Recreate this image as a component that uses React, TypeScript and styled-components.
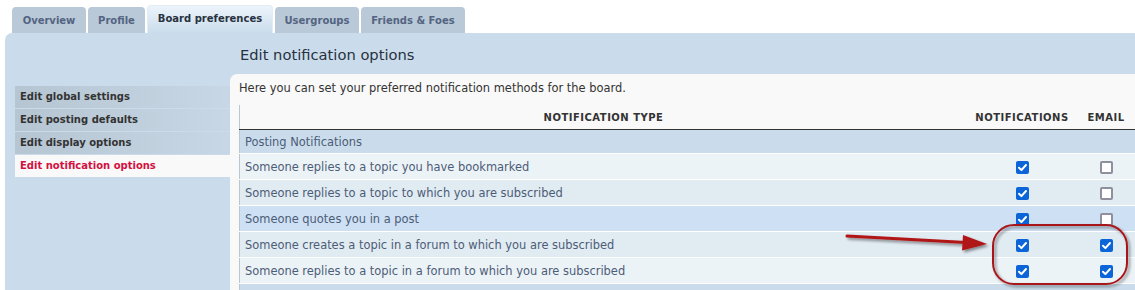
import React from "react";
import styled, { createGlobalStyle } from "styled-components";

const GlobalStyle = createGlobalStyle`
  body {
    margin: 0;
    background: #ffffff;
    font-family: "DejaVu Sans", Verdana, sans-serif;
  }
`;

const Page = styled.div`
  position: relative;
  width: 1135px;
  height: 290px;
  overflow: hidden;
`;

const TabBar = styled.div`
  display: flex;
  align-items: flex-end;
  gap: 2px;
  height: 33px;
  padding-left: 12px;
  box-sizing: border-box;
`;

const Tab = styled.div<{ $active?: boolean; $w: number }>`
  width: ${(p) => p.$w}px;
  height: ${(p) => (p.$active ? "28px" : "26px")};
  line-height: 26px;
  text-align: center;
  font-size: 10px;
  font-weight: bold;
  white-space: nowrap;
  border-radius: 4px 4px 0 0;
  box-sizing: border-box;
  color: ${(p) => (p.$active ? "#28313f" : "#536482")};
  background: ${(p) =>
    p.$active ? "linear-gradient(#ecf4fb, #cadceb)" : "#b9c9d7"};
  border: 1px solid ${(p) => (p.$active ? "#e2edf6" : "#b9c9d7")};
  border-bottom: none;
`;

const Panel = styled.div`
  display: flex;
  margin-left: 5px;
  height: 257px;
  background: #cadceb;
  border-radius: 7px 0 0 0;
  overflow: hidden;
`;

const Nav = styled.ul`
  list-style: none;
  width: 215px;
  margin: 53px 0 0 10px;
  padding: 0;
  flex-shrink: 0;
`;

const NavItem = styled.li<{ $active?: boolean }>`
  height: 22px;
  line-height: 22px;
  margin-bottom: 1px;
  padding-left: 5px;
  font-size: 10px;
  font-weight: bold;
  color: ${(p) => (p.$active ? "#d31141" : "#333333")};
  background: ${(p) =>
    p.$active ? "#f9f9f9" : "linear-gradient(to right, #b5c5d2, #c7d7e5)"};
`;

const Main = styled.div`
  flex: 1;
  display: flex;
  flex-direction: column;
  min-width: 0;
`;

const Title = styled.h1`
  flex-shrink: 0;
  height: 41px;
  margin: 0;
  padding: 13px 0 0 10px;
  box-sizing: border-box;
  font-family: "DejaVu Sans", sans-serif;
  font-weight: normal;
  font-size: 14.7px;
  color: #28313f;
`;

const Content = styled.div`
  flex: 1;
  background: #f9f9f9;
  border-radius: 7px 0 0 0;
  padding: 7px 0 0 9px;
  overflow: hidden;
`;

const Intro = styled.p`
  margin: 0;
  font-size: 11.45px;
  line-height: 14px;
  color: #333333;
`;

const Table = styled.table`
  width: 896px;
  margin-top: 10px;
  border-collapse: collapse;
  table-layout: fixed;
  border-left: 1px solid #bcc6cf;
`;

const Th = styled.th<{ $w?: number }>`
  width: ${(p) => (p.$w ? `${p.$w}px` : "auto")};
  height: 24px;
  padding: 0;
  font-size: 10px;
  letter-spacing: 0.5px;
  font-weight: bold;
  text-transform: uppercase;
  color: #333333;
  text-align: center;
  border-bottom: 1px solid #333333;
`;

const Row = styled.tr<{ $bg: string; $h?: number }>`
  background: ${(p) => p.$bg};
  height: ${(p) => p.$h ?? 26}px;
  border-bottom: 1px solid #ffffff;
`;

const Cell = styled.td<{ $center?: boolean }>`
  padding: 0 0 0 ${(p) => (p.$center ? 0 : 5)}px;
  font-size: 11.45px;
  color: #4c5d77;
  text-align: ${(p) => (p.$center ? "center" : "left")};
  vertical-align: middle;
`;

const Box = styled.span<{ $checked: boolean }>`
  display: inline-block;
  width: 13px;
  height: 13px;
  box-sizing: border-box;
  border-radius: 2px;
  vertical-align: middle;
  background: ${(p) => (p.$checked ? "#0b65d8" : "#ffffff")};
  border: ${(p) => (p.$checked ? "none" : "2px solid #8f8f9d")};
  svg {
    display: block;
  }
`;

const Overlay = styled.svg`
  position: absolute;
  left: 0;
  top: 0;
  pointer-events: none;
`;

function Checkbox({ checked }: { checked: boolean }) {
  return (
    <Box $checked={checked}>
      {checked && (
        <svg width="13" height="13" viewBox="0 0 13 13">
          <path d="M3 6.8 L5.4 9.1 L10 4" fill="none" stroke="#fff" strokeWidth="2" strokeLinecap="round" strokeLinejoin="round" />
        </svg>
      )}
    </Box>
  );
}

const tabs = [
  { label: "Overview", w: 74 },
  { label: "Profile", w: 57 },
  { label: "Board preferences", w: 126 },
  { label: "Usergroups", w: 84 },
  { label: "Friends & Foes", w: 104 },
];
const navItems = ["Edit global settings", "Edit posting defaults", "Edit display options", "Edit notification options"];

const rows = [
  { text: "Someone replies to a topic you have bookmarked", bg: "#ecf3f7", n: true, e: false },
  { text: "Someone replies to a topic to which you are subscribed", bg: "#e1ebf2", n: true, e: false },
  { text: "Someone quotes you in a post", bg: "#cee0f4", n: true, e: false },
  { text: "Someone creates a topic in a forum to which you are subscribed", bg: "#e1ebf2", n: true, e: true },
  { text: "Someone replies to a topic in a forum to which you are subscribed", bg: "#ecf3f7", n: true, e: true },
];

export default function App() {
  return (
    <Page>
      <GlobalStyle />
      <TabBar>
        {tabs.map((t) => (
          <Tab key={t.label} $w={t.w} $active={t.label === "Board preferences"}>{t.label}</Tab>
        ))}
      </TabBar>
      <Panel>
        <Nav>
          {navItems.map((n, i) => (
            <NavItem key={n} $active={i === navItems.length - 1}>{n}</NavItem>
          ))}
        </Nav>
        <Main>
          <Title>Edit notification options</Title>
          <Content>
            <Intro>Here you can set your preferred notification methods for the board.</Intro>
            <Table>
              <thead>
                <tr>
                  <Th>Notification type</Th>
                  <Th $w={110}>Notifications</Th>
                  <Th $w={58}>Email</Th>
                </tr>
              </thead>
              <tbody>
                <Row $bg="#cadceb" $h={24}>
                  <Cell colSpan={3}>Posting Notifications</Cell>
                </Row>
                {rows.map((r) => (
                  <Row key={r.text} $bg={r.bg}>
                    <Cell>{r.text}</Cell>
                    <Cell $center><Checkbox checked={r.n} /></Cell>
                    <Cell $center><Checkbox checked={r.e} /></Cell>
                  </Row>
                ))}
                <Row $bg="#cadceb" $h={24}>
                  <Cell colSpan={3} />
                </Row>
              </tbody>
            </Table>
          </Content>
        </Main>
      </Panel>
      <Overlay width="1135" height="290" viewBox="0 0 1135 290">
        <defs>
          <filter id="sh" x="-10%" y="-30%" width="130%" height="170%">
            <feGaussianBlur in="SourceAlpha" stdDeviation="1.5" />
            <feOffset dx="2" dy="2" result="b" />
            <feComponentTransfer><feFuncA type="linear" slope="0.45" /></feComponentTransfer>
            <feMerge>
              <feMergeNode />
              <feMergeNode in="SourceGraphic" />
            </feMerge>
          </filter>
        </defs>
        <g filter="url(#sh)">
          <path d="M847 236 L966 242.5" stroke="#b01616" strokeWidth="3" fill="none" strokeLinecap="round" />
          <path d="M963 235 L987 244 L962 250.5 Z" fill="#b01616" />
          <rect x="993" y="225" width="134" height="59" rx="21" ry="21" fill="none" stroke="#a8191c" strokeWidth="2" />
        </g>
      </Overlay>
    </Page>
  );
}
